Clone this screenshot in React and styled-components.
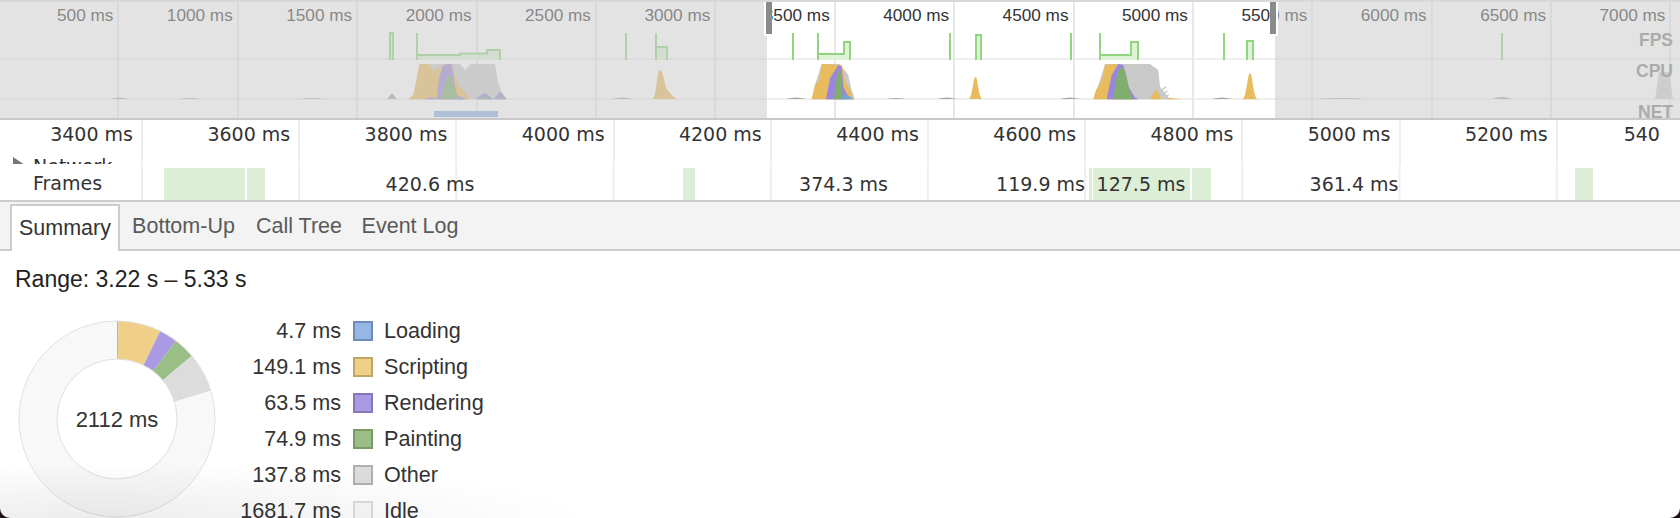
import styled, { createGlobalStyle } from "styled-components";

const overviewTicks = ["500 ms", "1000 ms", "1500 ms", "2000 ms", "2500 ms", "3000 ms", "3500 ms", "4000 ms", "4500 ms", "5000 ms", "5500 ms", "6000 ms", "6500 ms", "7000 ms"];
const rulerTicks = ["3400 ms", "3600 ms", "3800 ms", "4000 ms", "4200 ms", "4400 ms", "4600 ms", "4800 ms", "5000 ms", "5200 ms"];

const frames = [
    { w: 164, label: "" },
    { w: 81, on: true },
    { w: 2 },
    { w: 18, on: true },
    { w: 330, label: "420.6 ms" },
    { w: 87.5 },
    { w: 12.5, on: true },
    { w: 297, label: "374.3 ms" },
    { w: 97, label: "119.9 ms" },
    { w: 2.5, on: true },
    { w: 1 },
    { w: 97, on: true, label: "127.5 ms" },
    { w: 2 },
    { w: 19.5, on: true },
    { w: 286, label: "361.4 ms" },
    { w: 78 },
    { w: 18, on: true },
];

const slices = [
    { name: "Loading", ms: 4.7, fill: "#96b7e6", edge: "#6d8cb8" },
    { name: "Scripting", ms: 149.1, fill: "#f0d088", edge: "#bfa566" },
    { name: "Rendering", ms: 63.5, fill: "#a99ae3", edge: "#8678b8" },
    { name: "Painting", ms: 74.9, fill: "#9abf86", edge: "#7a9a68" },
    { name: "Other", ms: 137.8, fill: "#dcdcdc", edge: "#b0b0b0" },
    { name: "Idle", ms: 1681.7, fill: "#f8f8f8", edge: "#dcdcdc" },
];

function slicePath(from, to) {
    const R = 98;
    const r = 60;
    const p = (radius, a) => {
        const t = (a / 2112) * 2 * Math.PI - Math.PI / 2;
        return `${(100 + radius * Math.cos(t)).toFixed(2)} ${(100 + radius * Math.sin(t)).toFixed(2)}`;
    };
    const big = to - from > 1056 ? 1 : 0;
    return `M${p(R, from)} A${R} ${R} 0 ${big} 1 ${p(R, to)} L${p(r, to)} A${r} ${r} 0 ${big} 0 ${p(r, from)} Z`;
}

function Donut() {
    let at = 0;
    return (
        <DonutBox>
            <svg width="200" height="200" viewBox="0 0 200 200">
                {slices.map((s) => {
                    const from = at;
                    at += s.ms;
                    return <path key={s.name} d={slicePath(from, Math.min(at, 2112))} fill={s.fill} />;
                })}
                <circle cx="100" cy="100" r="98" fill="none" stroke="#e0e0e0" />
                <circle cx="100" cy="100" r="60" fill="none" stroke="#e0e0e0" />
            </svg>
            <DonutTotal>2112 ms</DonutTotal>
        </DonutBox>
    );
}

function Area({ color, points }) {
    return <polygon fill={color} points={points} />;
}

const TAN = "#e8bb5c";
const PURPLE = "#9a86de";
const GREEN = "#7fae6e";
const GREY = "#c9c9c9";
const BLUE = "#74a3dc";

function OverviewChart() {
    return (
        <ChartSvg viewBox="0 0 1680 120">
            {/* fps */}
            <g fill="#dff2d8" stroke="#8fd67f" strokeWidth="2">
                <path d="M390 60V33H393V60" />
                <path d="M417 60V33V55H460V53.5H487V50H500V60" />
                <path d="M626 60V33" />
                <path d="M656 60V33V47H667V60" />
                <path d="M793 60V33" />
                <path d="M818 60V33V54H844V42H850V60" />
                <path d="M950 60V33" />
                <path d="M976 60V35H981V60" />
                <path d="M1071 60V33" />
                <path d="M1100 60V33V55H1131V42H1138V60" />
                <path d="M1224 60V33" />
                <path d="M1247 60V41H1253V60" />
                <path d="M1502 60V33" />
            </g>

            {/* cpu, baseline bumps */}
            <path
                d="M110 99Q119 96 128 99H180Q190 97 200 99H300Q312 97 324 99H387L392 93L397 99H612Q622 96 632 99H786Q796 96 806 99H886Q896 97 906 99H937Q947 96 957 99H1060Q1070 96 1080 99H1212Q1222 96 1232 99H1316Q1350 97 1363 99H1492Q1502 95 1512 99"
                fill="#a8a8a8"
            />
            <polygon points="1655,99 1659,72 1669,72 1673,99" fill="#cfcfcf" />

            {/* 2000 ms burst */}
            <g transform="translate(380 20) scale(.3333)">
                <Area color={GREY} points="85,238 100,225 118,132 240,132 255,150 272,132 345,132 355,190 365,215 380,238" />
                <Area color={TAN} points="85,238 100,225 110,180 118,132 145,132 162,153 182,140 200,132 215,132 235,195 250,210 268,238" />
                <Area color={PURPLE} points="130,238 150,232 170,235 178,170 190,135 215,132 220,165 230,225 260,238" />
                <Area color={PURPLE} points="285,238 315,218 340,238 360,215 380,238" />
                <Area color={GREEN} points="180,238 195,190 208,160 220,190 235,235 255,238" />
                <Area color={GREEN} points="295,238 315,228 335,238 350,238 362,228 378,238" />
                <Area color={BLUE} points="215,238 230,233 250,238" />
            </g>

            {/* 3000 ms peak */}
            <path d="M653 99C657 92 657 70 660 70C664 70 664 88 669 92C672 95 674 98 678 99Z" fill={TAN} />

            {/* 4000 ms burst */}
            <g transform="translate(760 0) scale(.3333)">
                <Area color={GREY} points="155,298 165,255 185,192 240,192 265,225 275,270 285,298" />
                <Area color={TAN} points="155,298 165,255 178,240 185,192 245,195 255,240 270,270 280,298" />
                <Area color={PURPLE} points="198,298 210,235 235,195 245,200 250,260 262,285 270,298" />
                <Area color={GREEN} points="222,298 228,240 240,200 248,290 250,298" />
                <Area color={BLUE} points="240,298 258,283 282,298" />
            </g>

            {/* 4500 ms peak */}
            <path d="M969 99C973 95 973 77 975.5 77C978 77 978 95 982 99Z" fill={TAN} />

            {/* 5000 ms burst */}
            <g transform="translate(1070 20) scale(.3333)">
                <Area color={GREY} points="70,238 90,180 105,132 240,132 265,150 270,200 300,238" />
                <Area color={TAN} points="70,238 78,210 95,185 105,135 135,132 150,135 165,215 200,238" />
                <Area color={TAN} points="240,238 258,208 275,238" />
                <Area color={TAN} points="290,238 300,233 335,238" />
                <Area color={PURPLE} points="110,238 125,165 145,132 160,135 175,200 195,232 205,238" />
                <Area color={GREEN} points="130,238 140,170 150,142 165,150 180,215 190,238" />
                <path d="M518 238C532 225 532 160 540 160C548 160 548 225 562 238Z" fill={TAN} />
                <path d="M272 214L288 200M276 226L292 212M282 236L296 224" stroke="#c9c9c9" strokeWidth="4" />
            </g>

            {/* net */}
            <rect x="434" y="111" width="64" height="6" fill="#8fb0e6" />
        </ChartSvg>
    );
}

export default function App() {
    return (
        <>
            <GlobalStyle />
            <Window>
                <Overview>
                    <Lane $h={58} $top={28}><LaneLabel>FPS</LaneLabel></Lane>
                    <Lane $h={40} $top={1}><LaneLabel>CPU</LaneLabel></Lane>
                    <Lane $h={18} $top={2} $plain><LaneLabel>NET</LaneLabel></Lane>
                    <OverviewTicks>
                        {overviewTicks.map((t) => (
                            <OverviewTick key={t}>{t}</OverviewTick>
                        ))}
                    </OverviewTicks>
                    <OverviewChart />
                    <Dim $left={0} $width={767} />
                    <Dim $left={1275} $width={405} />
                    <Handle $left={764} $side="left" />
                    <Handle $left={1270} $side="right" />
                </Overview>

                <Ruler>
                    <RulerCell $w={143}>
                        <RulerLabel>3400 ms</RulerLabel>
                        <NetworkToggle>
                            <Arrow />
                            Network
                        </NetworkToggle>
                    </RulerCell>
                    {rulerTicks.slice(1).map((t) => (
                        <RulerCell key={t} $w={157.2}>
                            <RulerLabel>{t}</RulerLabel>
                        </RulerCell>
                    ))}
                    <RulerCell $w={123} $plain>
                        <RulerTail>540</RulerTail>
                    </RulerCell>
                </Ruler>

                <FrameRow>
                    <FramesTitle>Frames</FramesTitle>
                    {frames.map((f, i) => (
                        <Frame key={i} $w={f.w} $on={f.on}>
                            {f.label}
                        </Frame>
                    ))}
                </FrameRow>

                <TabBar>
                    <Tab $active $w={110}>Summary</Tab>
                    <Tab $w={127}>Bottom-Up</Tab>
                    <Tab $w={104}>Call Tree</Tab>
                    <Tab $w={118}>Event Log</Tab>
                </TabBar>

                <Details>
                    <RangeTitle>Range: 3.22 s – 5.33 s</RangeTitle>
                    <SummaryRow>
                        <Donut />
                        <Legend>
                            {slices.map((s) => (
                                <LegendRow key={s.name}>
                                    <LegendValue>{s.ms} ms</LegendValue>
                                    <Swatch $fill={s.fill} $edge={s.edge} />
                                    <span>{s.name}</span>
                                </LegendRow>
                            ))}
                        </Legend>
                    </SummaryRow>
                </Details>
                <Shade />
            </Window>
        </>
    );
}

const GlobalStyle = createGlobalStyle`
    html, body {
        margin: 0;
        padding: 0;
        height: 518px;
        overflow: hidden;
        background: #1c1412;
    }
    body {
        font-family: "Liberation Sans", Arial, sans-serif;
    }
`;

const Window = styled.div`
    position: relative;
    width: 1680px;
    height: 518px;
    overflow: hidden;
    background: #ffffff;
    border-radius: 0 0 10px 10px;
    color: #333333;
`;

const Overview = styled.div`
    position: relative;
    box-sizing: border-box;
    height: 120px;
    overflow: hidden;
    background: #ffffff;
    border-top: 2px solid #d8d8d8;
    border-bottom: 2px solid #c8c8c8;
`;

const Lane = styled.div`
    box-sizing: border-box;
    height: ${({ $h }) => $h}px;
    padding: ${({ $top }) => $top}px 7px 0 0;
    border-bottom: ${({ $plain }) => ($plain ? "none" : "2px solid #efefef")};
    text-align: right;
`;

const LaneLabel = styled.span`
    position: relative;
    z-index: 2;
    font-size: 17.5px;
    line-height: 20px;
    font-weight: bold;
    color: #ababab;
`;

const OverviewTicks = styled.div`
    position: absolute;
    top: 0;
    left: 0;
    bottom: 0;
    display: grid;
    grid-template-columns: repeat(14, 119.4px);
`;

const OverviewTick = styled.div`
    box-sizing: border-box;
    padding: 1px 4px 0 0;
    border-right: 2px solid #e8e8e8;
    text-align: right;
    font-size: 17.2px;
    line-height: 24px;
    white-space: nowrap;
    color: #333333;
`;

const ChartSvg = styled.svg`
    position: absolute;
    top: -2px;
    left: 0;
    width: 1680px;
    height: 120px;
    filter: blur(0.4px);
`;

const Dim = styled.div`
    position: absolute;
    top: -2px;
    bottom: -2px;
    left: ${({ $left }) => $left}px;
    width: ${({ $width }) => $width}px;
    background: rgba(204, 204, 204, 0.55);
`;

const Handle = styled.div`
    position: absolute;
    z-index: 3;
    top: 0;
    left: ${({ $left }) => $left}px;
    width: 6px;
    height: 32px;
    background: #8a8a8a;
    border-bottom: 2px solid #ffffff;
    border-${({ $side }) => $side}: 2px solid #ffffff;
`;

const Ruler = styled.div`
    display: flex;
    height: 44px;
    overflow: hidden;
`;

const RulerCell = styled.div`
    box-sizing: border-box;
    flex: none;
    width: ${({ $w }) => $w}px;
    padding-right: 8px;
    border-right: ${({ $plain }) => ($plain ? "none" : "2px solid #eeeeee")};
    font-family: "DejaVu Sans", sans-serif;
    font-size: 19px;
    color: #333333;
`;

const RulerLabel = styled.div`
    height: 30px;
    line-height: 28px;
    text-align: right;
    white-space: nowrap;
`;

const RulerTail = styled(RulerLabel)`
    padding-left: 66px;
    text-align: left;
`;

const NetworkToggle = styled.div`
    display: flex;
    align-items: flex-start;
    gap: 8px;
    box-sizing: border-box;
    height: 14px;
    overflow: hidden;
    padding: 6px 0 0 13px;
    line-height: 20px;
`;

const Arrow = styled.span`
    width: 0;
    height: 0;
    margin-top: 1px;
    border-top: 8px solid transparent;
    border-bottom: 8px solid transparent;
    border-left: 12px solid #777777;
`;

const FrameRow = styled.div`
    position: relative;
    display: flex;
    box-sizing: border-box;
    height: 35px;
    margin-top: 1px;
    padding-top: 3px;
    background-image: linear-gradient(to right, #eeeeee 2px, transparent 2px);
    background-size: 157.2px 100%;
    background-position: 141px 0;
    background-repeat: repeat-x;
    font-family: "DejaVu Sans", sans-serif;
    font-size: 19px;
    color: #333333;
`;

const FramesTitle = styled.div`
    position: absolute;
    top: 5px;
    left: 33px;
    line-height: 26px;
`;

const Frame = styled.div`
    box-sizing: border-box;
    flex: none;
    width: ${({ $w }) => $w}px;
    background: ${({ $on }) => ($on ? "#dcefd6" : "transparent")};
    text-align: center;
    line-height: 33px;
    white-space: nowrap;
`;

const TabBar = styled.div`
    display: flex;
    align-items: stretch;
    box-sizing: border-box;
    height: 51px;
    padding: 2px 0 0 10px;
    background: #f3f3f3;
    border-top: 2px solid #cccccc;
    border-bottom: 2px solid #cccccc;
`;

const Tab = styled.div`
    display: flex;
    align-items: center;
    justify-content: center;
    flex: none;
    width: ${({ $w }) => $w}px;
    height: ${({ $active }) => ($active ? "47px" : "auto")};
    box-sizing: border-box;
    background: ${({ $active }) => ($active ? "#ffffff" : "transparent")};
    border: ${({ $active }) => ($active ? "2px solid #cccccc" : "none")};
    border-bottom: none;
    font-size: 21.5px;
    color: ${({ $active }) => ($active ? "#333333" : "#5a5a5a")};
`;

const Details = styled.div`
    padding: 14px 0 0 15px;
`;

const RangeTitle = styled.div`
    font-size: 23px;
    line-height: 28px;
    color: #222222;
`;

const SummaryRow = styled.div`
    display: flex;
    margin-top: 26px;
`;

const DonutBox = styled.div`
    position: relative;
    flex: none;
    width: 200px;
    height: 200px;
    margin-left: 2px;
`;

const DonutTotal = styled.div`
    position: absolute;
    inset: 0;
    display: flex;
    align-items: center;
    justify-content: center;
    padding-top: 2px;
    font-size: 22px;
    color: #333333;
`;

const Legend = styled.div`
    display: flex;
    flex-direction: column;
    gap: 10px;
    margin-top: -1px;
    font-size: 21.6px;
    line-height: 26px;
    color: #333333;
`;

const LegendRow = styled.div`
    display: grid;
    grid-template-columns: 124px 20px auto;
    column-gap: 11.5px;
    align-items: center;
`;

const LegendValue = styled.span`
    text-align: right;
    white-space: nowrap;
`;

const Swatch = styled.span`
    box-sizing: border-box;
    width: 20px;
    height: 20px;
    background: ${({ $fill }) => $fill};
    border: 2px solid ${({ $edge }) => $edge};
`;

const Shade = styled.div`
    position: absolute;
    left: 0;
    bottom: 0;
    width: 620px;
    height: 60px;
    pointer-events: none;
    background: radial-gradient(ellipse 500px 56px at 90px 100%, rgba(0, 0, 0, 0.07), rgba(0, 0, 0, 0));
`;
